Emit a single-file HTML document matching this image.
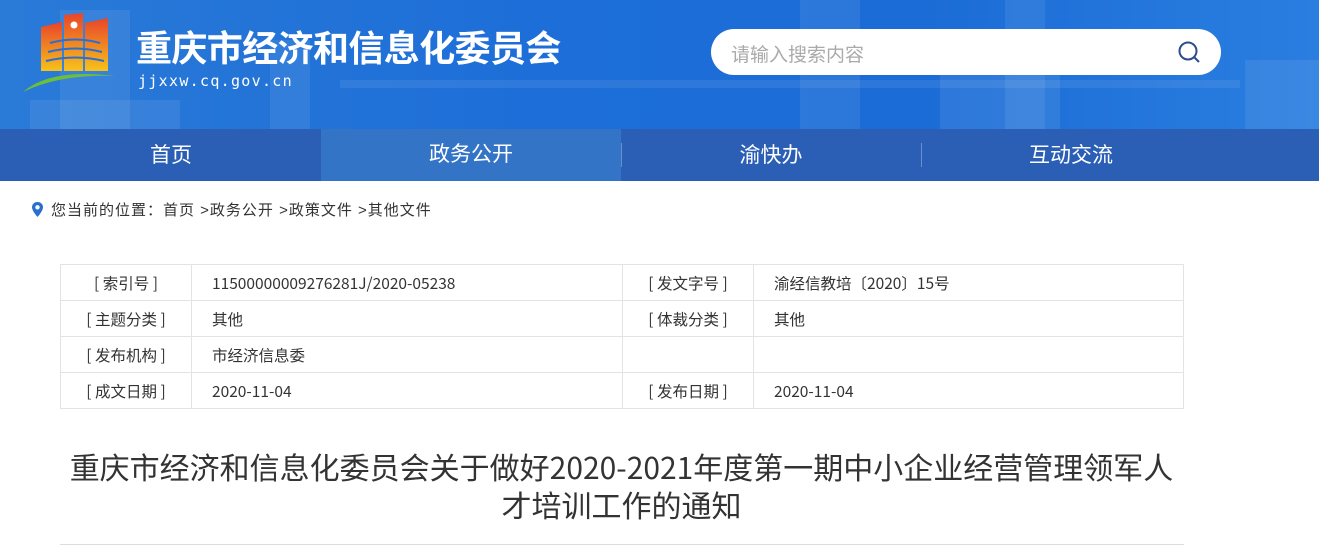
<!DOCTYPE html>
<html><head><meta charset="utf-8"><style>
*{margin:0;padding:0;box-sizing:border-box}
body{width:1319px;height:554px;overflow:hidden;background:#fff;font-family:"Liberation Sans","Noto Sans CJK SC",sans-serif}
.hd{position:absolute;left:0;top:0;width:1319px;height:129px;background:linear-gradient(90deg,#2a7ad8 0%,#1d6ed8 40%,#1b6cd6 70%,#2a7ee0 100%);overflow:hidden}
.bld{position:absolute;background:rgba(255,255,255,0.08)}
.title{position:absolute;left:136px;top:20px;color:#fff;font-size:36px;font-weight:bold;font-family:"Noto Sans CJK SC",sans-serif;letter-spacing:-0.6px}
.url{position:absolute;left:138px;top:72px;color:#fff;font-size:15px;letter-spacing:1.3px;font-family:"DejaVu Sans Mono","Liberation Mono",monospace}
.search{position:absolute;left:711px;top:29px;width:510px;height:46px;background:#fff;border-radius:23px}
.search span{position:absolute;left:20px;top:11px;font-size:19px;color:#aaa}
.nav{position:absolute;left:0;top:129px;width:1319px;height:52px;background:#2b5fb6}
.nav div{position:absolute;top:1px;height:52px;width:300px;text-align:center;line-height:52px;color:#fff;font-size:21px}
.nav div.a{top:0;background:#3474c6}
.sep{position:absolute;top:14px;width:1px;height:24px;background:rgba(255,255,255,0.3)}
.crumb{position:absolute;left:51px;top:199px;font-size:15px;color:#333;letter-spacing:1px}
table{position:absolute;left:60px;top:264px;width:1124px;border-collapse:collapse;font-size:15.5px;color:#333;font-family:"Noto Sans CJK SC",sans-serif}
td{border:1px solid #e3e3e3;height:36px;padding:0;line-height:20px;vertical-align:middle}
td.l{text-align:center;width:131px}
td.v{padding-left:20px}
h1{position:absolute;left:40px;top:447px;width:1239px;left:2px;text-align:center;font-size:30px;font-weight:normal;color:#333;line-height:38px;font-family:"Noto Sans CJK SC",sans-serif;letter-spacing:0px}
.hr{position:absolute;left:60px;top:544px;width:1124px;height:1px;background:#ddd}
</style></head><body>
<div class="hd">
<div class="bld" style="left:30px;top:100px;width:150px;height:29px"></div>
<div class="bld" style="left:60px;top:10px;width:70px;height:119px"></div>
<div class="bld" style="left:270px;top:40px;width:40px;height:89px"></div>
<div class="bld" style="left:800px;top:0px;width:60px;height:129px"></div>
<div class="bld" style="left:1005px;top:0;width:40px;height:129px"></div>
<div class="bld" style="left:940px;top:70px;width:120px;height:59px"></div>
<div class="bld" style="left:1245px;top:60px;width:74px;height:69px"></div>
<div class="bld" style="left:340px;top:80px;width:900px;height:8px"></div>
<svg style="position:absolute;left:20px;top:10px" width="100" height="85" viewBox="0 0 100 85">
<defs><linearGradient id="g" x1="0" y1="0" x2="0" y2="1"><stop offset="0" stop-color="#e8452a"/><stop offset="1" stop-color="#f7c21c"/></linearGradient></defs>
<path d="M21 17 L42 12 L42 61 L21 61Z" fill="url(#g)"/>
<path d="M44 5 L63 3 L63 61 L44 61Z" fill="url(#g)"/>
<path d="M65 13 L88 8 L88 61 L65 61Z" fill="url(#g)"/>
<circle cx="54" cy="15" r="3.5" fill="#fff"/>
<path d="M30 33 Q55 26 80 33 M28 42 Q55 35 82 42 M26 51 Q55 44 84 51" stroke="#2a6fd0" stroke-width="2" fill="none"/>
<path d="M3 82 Q30 58 95 66 Q40 64 3 82Z" fill="#6dbf3a"/>
</svg>
<div class="title">重庆市经济和信息化委员会</div>
<div class="url">jjxxw.cq.gov.cn</div>
<div class="search"><span>请输入搜索内容</span>
<svg style="position:absolute;left:466px;top:11px" width="26" height="26" viewBox="0 0 26 26"><circle cx="11" cy="11" r="8.5" stroke="#2d4c8c" stroke-width="2" fill="none"/><path d="M17 17 L22 22" stroke="#2d4c8c" stroke-width="2"/></svg></div>
</div>
<div class="nav">
<div style="left:21px">首页</div>
<div class="a" style="left:321px">政务公开</div>
<div style="left:621px">渝快办</div>
<div style="left:921px">互动交流</div>
<span class="sep" style="left:621px"></span><span class="sep" style="left:921px"></span>
</div>
<svg style="position:absolute;left:31px;top:201px" width="13" height="17" viewBox="0 0 13 17"><path d="M6.5 1 C3 1 1 3.5 1 6.3 C1 10 6.5 16 6.5 16 C6.5 16 12 10 12 6.3 C12 3.5 10 1 6.5 1Z" fill="#2a6fd0"/><circle cx="6.5" cy="6.3" r="2.2" fill="#fff"/></svg>
<div class="crumb">您当前的位置：首页 &gt;政务公开 &gt;政策文件 &gt;其他文件</div>
<table>
<tr><td class="l">[ 索引号 ]</td><td class="v" style="width:431px">11500000009276281J/2020-05238</td><td class="l">[ 发文字号 ]</td><td class="v">渝经信教培〔2020〕15号</td></tr>
<tr><td class="l">[ 主题分类 ]</td><td class="v">其他</td><td class="l">[ 体裁分类 ]</td><td class="v">其他</td></tr>
<tr><td class="l">[ 发布机构 ]</td><td class="v">市经济信息委</td><td class="l"></td><td class="v"></td></tr>
<tr><td class="l">[ 成文日期 ]</td><td class="v">2020-11-04</td><td class="l">[ 发布日期 ]</td><td class="v">2020-11-04</td></tr>
</table>
<h1>重庆市经济和信息化委员会关于做好2020-2021年度第一期中小企业经营管理领军人<br>才培训工作的通知</h1>
<div class="hr"></div>
</body></html>
